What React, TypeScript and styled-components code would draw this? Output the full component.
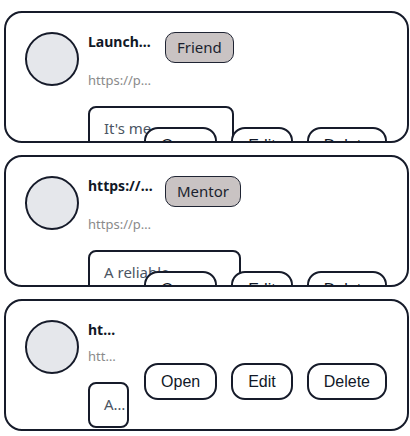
import React from 'react'
import styled, { css, createGlobalStyle } from 'styled-components'

const ink = '#161b2a'

const GlobalStyle = createGlobalStyle`
*{box-sizing:border-box;}
body{margin:0;background:#fff;font-family:"Noto Sans","Open Sans",sans-serif;}
`

type Contact = {
  name: string
  url: string
  tag?: string
  about: string
  infoWidth: number
  lines: number
}

const contacts: Contact[] = [
  {
    name: 'Launchpad Buddy',
    url: 'https://profile.example.com/launchpad',
    tag: 'Friend',
    about:
      "It's me Launchpad, your launch buddy. I help you plan, ship and celebrate every release with the whole team, from the first idea to the last bug.",
    infoWidth: 146,
    lines: 5,
  },
  {
    name: 'https://mentor.example.com',
    url: 'https://profile.example.com/mentor',
    tag: 'Mentor',
    about:
      'A reliable, knowledgeable mentor who reviews your work, answers questions and shares honest advice whenever you get stuck on something hard.',
    infoWidth: 153,
    lines: 5,
  },
  {
    name: 'https://contact.example.com',
    url: 'https://profile.example.com/contact',
    about: 'A contact without a tag yet.',
    infoWidth: 30,
    lines: 1,
  },
]

export default function App() {
  return (
    <>
      <GlobalStyle />
      <List>
        {contacts.map((c, i) => (
          <Card key={i}>
            <Row>
              <Avatar />
              <Body>
                <Stack $width={c.infoWidth}>
                  <Header>
                    <Title>{c.name}</Title>
                    {c.tag && <Badge>{c.tag}</Badge>}
                  </Header>
                  <Url>{c.url}</Url>
                  <About $lines={c.lines}>{c.about}</About>
                </Stack>
              </Body>
              <Actions>
                <Button>Open</Button>
                <Button>Edit</Button>
                <Button>Delete</Button>
              </Actions>
            </Row>
          </Card>
        ))}
      </List>
    </>
  )
}

const List = styled.div`
display:flex;
flex-direction:column;
gap:12px;
padding:11px 1px 0 4px;
`
const Card = styled.div`
height:132px;
overflow:hidden;
background:#fff;
border:2px solid ${ink};
border-radius:18px;
padding:19px 20px 0 19px;
`
const Row = styled.div`
display:flex;
align-items:center;
gap:9px;
`
const Avatar = styled.div`
align-self:flex-start;
flex-shrink:0;
width:54px;
height:54px;
border-radius:50%;
background:#e5e7eb;
border:2px solid ${ink};
`
const Body = styled.div`
flex:1;
min-width:0;
padding-bottom:15px;
`
const Stack = styled.div<{ $width: number }>`
display:flex;
flex-direction:column;
align-items:flex-start;
width:${(p) => p.$width}px;
`
const Header = styled.div`
display:flex;
align-items:flex-start;
gap:11px;
max-width:100%;
`
const Title = styled.div`
flex:0 1 auto;
min-width:0;
max-width:66px;
font-size:14px;
line-height:19px;
font-weight:700;
color:#111827;
white-space:nowrap;
overflow:hidden;
text-overflow:ellipsis;
`
const Badge = styled.span`
flex-shrink:0;
padding:4px 11px;
font-size:15px;
line-height:21px;
color:#1a1f2e;
background:#c9c3c3;
border:1px solid #1f2433;
border-radius:10px;
`
const Url = styled.div`
margin-top:8px;
max-width:min(66px,100%);
font-size:13px;
line-height:18px;
color:#8a8a8a;
white-space:nowrap;
overflow:hidden;
text-overflow:ellipsis;
`
const About = styled.div<{ $lines: number }>`
margin-top:17px;
width:100%;
min-width:41px;
padding:9px 0 10px 14px;
font-size:15px;
line-height:23px;
color:#4b5563;
border:2px solid ${ink};
border-radius:8px;
background:#fff;
overflow:hidden;
${(p) =>
  p.$lines === 1
    ? css`
        white-space:nowrap;
        text-overflow:ellipsis;
      `
    : css`
        display:-webkit-box;
        -webkit-box-orient:vertical;
        -webkit-line-clamp:${p.$lines};
      `}
`
const Actions = styled.div`
display:flex;
gap:14px;
flex-shrink:0;
`
const Button = styled.button`
height:37px;
padding:0 15px;
font-family:"Liberation Sans",Arial,sans-serif;
font-size:16px;
color:#111827;
background:#fff;
border:2px solid ${ink};
border-radius:14px;
cursor:pointer;
`
